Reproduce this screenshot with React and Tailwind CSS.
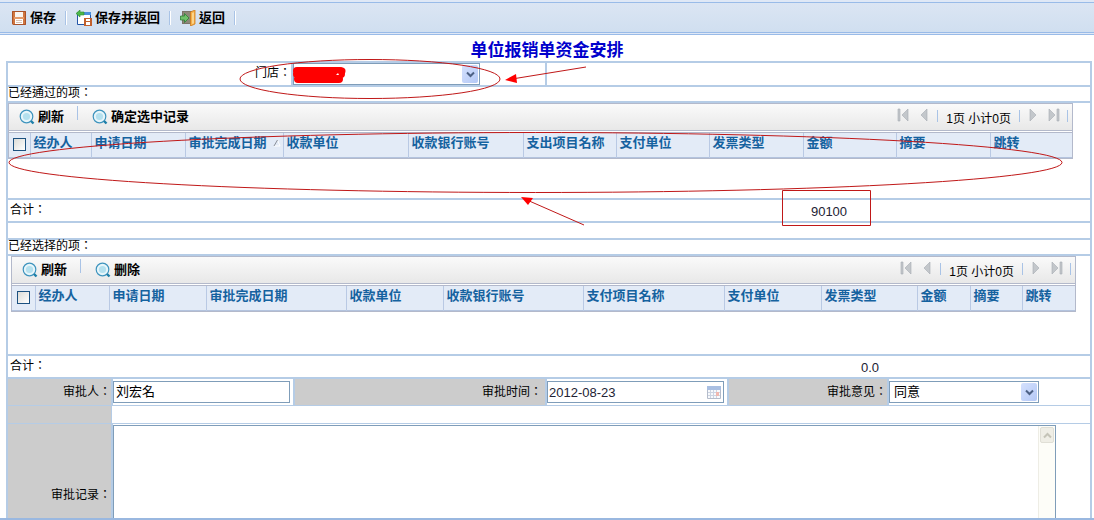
import { useState } from "react";

const passedColumns = [
  { title: "经办人", width: 61 },
  { title: "申请日期", width: 94 },
  { title: "审批完成日期", width: 98, sorted: true },
  { title: "收款单位", width: 125 },
  { title: "收款银行账号", width: 115 },
  { title: "支出项目名称", width: 93 },
  { title: "支付单位", width: 93 },
  { title: "发票类型", width: 94 },
  { title: "金额", width: 93 },
  { title: "摘要", width: 94 },
  { title: "跳转", width: 82 },
];

const selectedColumns = [
  { title: "经办人", width: 74 },
  { title: "申请日期", width: 97 },
  { title: "审批完成日期", width: 140 },
  { title: "收款单位", width: 97 },
  { title: "收款银行账号", width: 140 },
  { title: "支付项目名称", width: 141 },
  { title: "支付单位", width: 97 },
  { title: "发票类型", width: 96 },
  { title: "金额", width: 53 },
  { title: "摘要", width: 52 },
  { title: "跳转", width: 53 },
];

const SaveIcon = () => (
  <svg width="16" height="16" viewBox="0 0 16 16" aria-hidden="true">
    <path d="M1 1h14v14H2l-1-1z" fill="#d0763f" />
    <path d="M1.500 1.500h13v13h-12l-1-1z" fill="none" stroke="#a9522a" />
    <path d="M4 2h8v5H4z" fill="#f8f4f0" />
    <path d="M3 7h10v2H3z" fill="#e39a6a" />
    <path d="M4 9h8v5H4z" fill="#fff" />
    <path d="M5 10.500h6M5 12.500h6" stroke="#d9c3b4" />
  </svg>
);

const SaveBackIcon = () => (
  <svg width="16" height="16" viewBox="0 0 16 16" aria-hidden="true">
    <path d="M1.500 2.500h13v12h-13z" fill="#fff" stroke="#2456a8" />
    <path d="M6 2h9v3H6z" fill="#4a90dc" />
    <path d="M0 3.500 4 0v2h4v3H4v2z" fill="#4db848" stroke="#2c8a2c" strokeWidth="0.600" />
    <path d="M8 8h8v8H8z" fill="#c2602c" />
    <path d="M10 9h4v2h-4zM10 12h4v3h-4z" fill="#fff" />
  </svg>
);

const ExitIcon = () => (
  <svg width="16" height="16" viewBox="0 0 16 16" aria-hidden="true">
    <path d="M2 1h10v13H2z" fill="#7b7468" />
    <path d="M3 2h7v11H3z" fill="#8d8778" />
    <path d="M10.500 2l4.500-2v14l-4.500 2z" fill="#f6b04a" stroke="#d07c1c" strokeWidth="0.800" />
    <path d="M12 3l2-.8v11l-2 .8z" fill="#fbd48c" />
    <path d="M.5 6h4V3.500L9 8l-4.500 4.500V10h-4z" fill="#6fc06a" stroke="#2d7d36" strokeWidth="0.800" />
  </svg>
);

const SearchIcon = () => (
  <svg width="16" height="16" viewBox="0 0 16 16" aria-hidden="true">
    <circle cx="7.500" cy="7.500" r="6.300" fill="#e6f5fa" stroke="#3d93bd" strokeWidth="1.200" />
    <circle cx="7.500" cy="7.500" r="3.600" fill="#b4e0ee" />
    <path d="M12 12l2.500 2.500" stroke="#1d7fa9" strokeWidth="2.400" />
  </svg>
);

const Separator = () => (
  <span className="h-3.5 w-0.5 border-l border-r border-l-[#a9c3e6] border-r-white" />
);

const ToolbarButton = ({ icon, children }) => (
  <button type="button" className="flex items-center gap-[3px] text-[13px] leading-4 font-bold">
    {icon}
    {children}
  </button>
);

const PagerButton = ({ label, path }) => (
  <button type="button" aria-label={label} className="mb-1">
    <svg width="16" height="14" viewBox="0 0 16 14" aria-hidden="true">
      <path d={path} fill="#c3c7cb" stroke="#a6abb1" strokeWidth="0.600" />
    </svg>
  </button>
);

const Pager = () => (
  <div className="ml-auto flex items-center gap-[5px] pr-1">
    <PagerButton label="首页" path="M3 1h2v12H3zM13 1v12L7 7z" />
    <PagerButton label="上一页" path="M11 1v12L5 7z" />
    <span className="mb-0.5 h-3 w-px bg-[#a9c3e6]" />
    <span className="px-[3px] pt-1 text-xs leading-4 whitespace-nowrap">1页 小计0页</span>
    <span className="mb-0.5 h-3 w-px bg-[#a9c3e6]" />
    <PagerButton label="下一页" path="M5 1v12l6-6z" />
    <PagerButton label="末页" path="M3 1v12l6-6zM11 1h2v12h-2z" />
    <span className="mb-0.5 h-3 w-px bg-[#a9c3e6]" />
  </div>
);

const GridPanel = ({ action, columns, checkWidth }) => (
  <div className="border border-[#b3b9cb]">
    <div className="flex h-[26px] items-center bg-linear-to-b from-[#fafafa] to-[#e8e8e8] pl-2.5">
      <ToolbarButton icon={<SearchIcon />}>刷新</ToolbarButton>
      <span className="mr-3.5 mb-2 ml-[13px] h-3.5 w-px bg-[#a9c3e6]" />
      <ToolbarButton icon={<SearchIcon />}>{action}</ToolbarButton>
      <Pager />
    </div>
    <div className="h-[3px] border-y border-[#b3b9cb] bg-white" />
    <table className="w-full table-fixed border-collapse bg-[#e3ebf7]">
      <colgroup>
        <col style={{ width: checkWidth }} />
        {columns.map((column) => (
          <col key={column.title} style={{ width: column.width }} />
        ))}
      </colgroup>
      <thead>
        <tr className="h-6 border-b border-[#b3c3de]">
          <th className="border-r border-[#b9c9e4] p-0">
            <input
              type="checkbox"
              aria-label="全选"
              className="mx-auto block size-[13px] appearance-none border border-[#1c5180] bg-linear-to-br from-[#dcdcd7] to-white checked:from-[#21a121]"
            />
          </th>
          {columns.map((column) => (
            <th
              key={column.title}
              className="border-r border-[#b9c9e4] p-0 pb-1 pl-[3px] text-left text-[13px] leading-4 font-bold whitespace-nowrap text-[#15629f] last:border-r-0"
            >
              {column.title}
              {column.sorted && (
                <svg width="8" height="8" viewBox="0 0 8 8" className="ml-1.5 inline" aria-hidden="true">
                  <path d="M1 7h6L4.500 1" fill="none" stroke="#fff" />
                  <path d="M1 7l3.500-6" stroke="#8a8f98" />
                </svg>
              )}
            </th>
          ))}
        </tr>
      </thead>
    </table>
  </div>
);

const SelectBox = ({ id, value, onChange, options }) => (
  <div className="relative h-[22px] border border-[#7f9db9] bg-white">
    <select
      id={id}
      value={value}
      onChange={(e) => onChange(e.target.value)}
      className="block h-full w-full appearance-none pl-1 text-[13px] leading-4 outline-none"
    >
      {options.map((option) => (
        <option key={option}>{option}</option>
      ))}
    </select>
    <span className="pointer-events-none absolute top-px right-px bottom-px flex w-4 items-center justify-center rounded-xs bg-linear-to-br from-[#d5e1fd] to-[#b4c8f6]">
      <svg width="9" height="7" viewBox="0 0 9 7" aria-hidden="true">
        <path d="M1 1.500l3.500 3.500L8 1.500" fill="none" stroke="#4d6185" strokeWidth="2" />
      </svg>
    </span>
  </div>
);

const CalendarIcon = () => (
  <svg width="14" height="13" viewBox="0 0 14 13" aria-hidden="true">
    <path d="M.5 .5h13v12H.5z" fill="#f7f9fc" stroke="#b4bccb" />
    <path d="M0 0h14v4H0z" fill="#a9bfe2" />
    <path d="M3.500 4v8M6.500 4v8M9.500 4v8M1 6.500h12M1 9.500h12" stroke="#ccd4e2" />
    <path d="M9 6h3v4H9z" fill="#f0b8b0" />
  </svg>
);

const TotalRow = ({ value, className }) => (
  <div className={`grid h-[23px] items-center border-b-2 border-[#b5cce6] ${className}`}>
    <span className="self-start pt-0.5 pl-0.5 text-xs leading-4">合计：</span>
    <output className="pt-0.5 text-center text-[13px] leading-4 text-[#223]">{value}</output>
  </div>
);

// Red marks drawn over the form: the store field, the grid rows and the total.
const Annotations = () => (
  <svg
    className="pointer-events-none absolute top-0 left-0 h-[520px] w-full"
    viewBox="0 0 1094 520"
    preserveAspectRatio="none"
    aria-hidden="true"
  >
    <path
      d="M297 71H340M297 74H341M298 79H339"
      fill="none"
      stroke="#ff0000"
      strokeWidth="8"
      strokeLinecap="round"
    />
    <path d="M335 71h7" stroke="#ff0000" strokeWidth="7" strokeLinecap="round" />
    <path d="M336 75l2-2 1 2z" fill="#fff" />
    <g fill="none" stroke="#c01818">
      <ellipse cx="370" cy="79" rx="130" ry="19.500" />
      <ellipse cx="535.500" cy="162.500" rx="526.500" ry="30" />
      <path d="M782.500 190.500h88v35h-88z" />
      <path d="M586 67L512 79M584 225L527 200" />
    </g>
    <path d="M505 80l11-6 1 9zM521 197l12 1-5 7z" fill="#ff0000" />
  </svg>
);

export default function App() {
  const [store, setStore] = useState("");
  const [approver, setApprover] = useState("刘宏名");
  const [date, setDate] = useState("2012-08-23");
  const [opinion, setOpinion] = useState("同意");
  const [record, setRecord] = useState("");

  return (
    <div className="h-screen overflow-x-hidden overflow-y-auto border-b-2 border-[#9ab8e0] bg-white font-['Liberation_Sans','Noto_Sans_CJK_TC',sans-serif] text-black [scrollbar-width:none]">
      <div className="relative">
        <header className="border-b border-[#99bbe8] bg-[#dfe8f6] pt-0.5 pb-px">
          <nav className="flex h-[31px] items-center gap-[9px] border-y border-[#99bbe8] bg-linear-to-b from-[#dbe5f3] to-[#d0dff0] pl-[11px]">
            <ToolbarButton icon={<SaveIcon />}>保存</ToolbarButton>
            <Separator />
            <ToolbarButton icon={<SaveBackIcon />}>保存并返回</ToolbarButton>
            <Separator />
            <ToolbarButton icon={<ExitIcon />}>返回</ToolbarButton>
            <Separator />
          </nav>
        </header>

        <h1 className="pt-1.5 text-center text-[17px] leading-5 font-bold text-[#0000cc]">
          单位报销单资金安排
        </h1>

        <form className="mr-0.5 ml-1.5 border-x-2 border-t-2 border-[#b5cce6]" onSubmit={(e) => e.preventDefault()}>
          <div className="grid h-6 grid-cols-[285fr_254fr_543fr] border-b-2 border-[#b5cce6]">
            <label htmlFor="store" className="border-r-2 border-[#b5cce6] pt-0.5 text-right text-xs leading-4">
              门店：
            </label>
            <div className="border-r-2 border-[#b5cce6] pr-[65px]">
              <SelectBox id="store" value={store} onChange={setStore} options={[""]} />
            </div>
          </div>

          <h2 className="h-4 border-b-2 border-[#b5cce6] text-xs leading-3">已经通过的项：</h2>
          <div className="h-[97px] border-b-2 border-[#b5cce6] pr-[17px]">
            <GridPanel action="确定选中记录" columns={passedColumns} checkWidth={21} />
          </div>
          <TotalRow value="90100" className="grid-cols-[777fr_88fr_217fr]" />
          <div className="h-[17px] border-b-2 border-[#b5cce6]" />

          <h2 className="h-4 border-b-2 border-[#b5cce6] text-xs leading-3">已经选择的项：</h2>
          <div className="h-[100px] border-b-2 border-[#b5cce6] pr-3.5 pl-[3px]">
            <GridPanel action="删除" columns={selectedColumns} checkWidth={23} />
          </div>
          <TotalRow value="0.0" className="grid-cols-[818fr_88fr_176fr]" />

          <div className="grid h-[27px] grid-cols-[105fr_180fr_254fr_180fr_162fr_201fr] border-b border-[#b5cce6] text-xs">
            <label htmlFor="approver" className="border-r-2 border-[#b5cce6] bg-[#cccccc] pt-px text-right leading-6">
              审批人：
            </label>
            <div className="pt-0.5 pr-[3px]">
              <input
                id="approver"
                value={approver}
                onChange={(e) => setApprover(e.target.value)}
                className="block h-[22px] w-full border border-[#7f9db9] px-0.5 pb-1 text-[13px] leading-4 outline-none"
              />
            </div>
            <label htmlFor="date" className="border-x-2 border-[#b5cce6] bg-[#cccccc] pt-px pr-[3px] text-right leading-6">
              审批时间：
            </label>
            <div className="pt-0.5 pr-[3px]">
              <div className="flex h-[22px] items-center border border-[#7f9db9] pr-0.5">
                <input
                  id="date"
                  value={date}
                  onChange={(e) => setDate(e.target.value)}
                  className="h-full w-full min-w-0 px-px text-[13px] leading-4 text-[#223] outline-none"
                />
                <button type="button" aria-label="选择日期">
                  <CalendarIcon />
                </button>
              </div>
            </div>
            <label htmlFor="opinion" className="border-x-2 border-[#b5cce6] bg-[#cccccc] pt-px text-right leading-6">
              审批意见：
            </label>
            <div className="pt-0.5 pr-[51px]">
              <SelectBox id="opinion" value={opinion} onChange={setOpinion} options={["同意", "不同意"]} />
            </div>
          </div>

          <div className="grid h-[18px] grid-cols-[104fr_978fr] border-b border-[#b5cce6]">
            <div className="border-r border-[#b5cce6] bg-[#cccccc]" />
          </div>

          <div className="grid grid-cols-[105fr_977fr]">
            <label
              htmlFor="record"
              className="flex items-center justify-end border-r-2 border-[#b5cce6] bg-[#cccccc] text-xs leading-4"
            >
              审批记录：
            </label>
            <div className="pt-px pr-[34px]">
              <div className="flex h-[140px] border border-[#7f9db9]">
                <textarea
                  id="record"
                  value={record}
                  onChange={(e) => setRecord(e.target.value)}
                  className="h-full flex-1 resize-none overflow-hidden p-0.5 text-[13px] leading-4 outline-none"
                />
                <div className="w-[17px] border-l border-[#eeede5] bg-[#fdfdf8] p-px">
                  <button
                    type="button"
                    aria-label="向上滚动"
                    className="flex h-4 w-full items-center justify-center rounded-xs border border-[#e0dfd6] bg-[#efeee6]"
                  >
                    <svg width="9" height="7" viewBox="0 0 9 7" aria-hidden="true">
                      <path d="M1 5.500L4.500 2 8 5.500" fill="none" stroke="#c5c4b8" strokeWidth="2" />
                    </svg>
                  </button>
                </div>
              </div>
            </div>
          </div>
        </form>

        <Annotations />
      </div>
    </div>
  );
}
